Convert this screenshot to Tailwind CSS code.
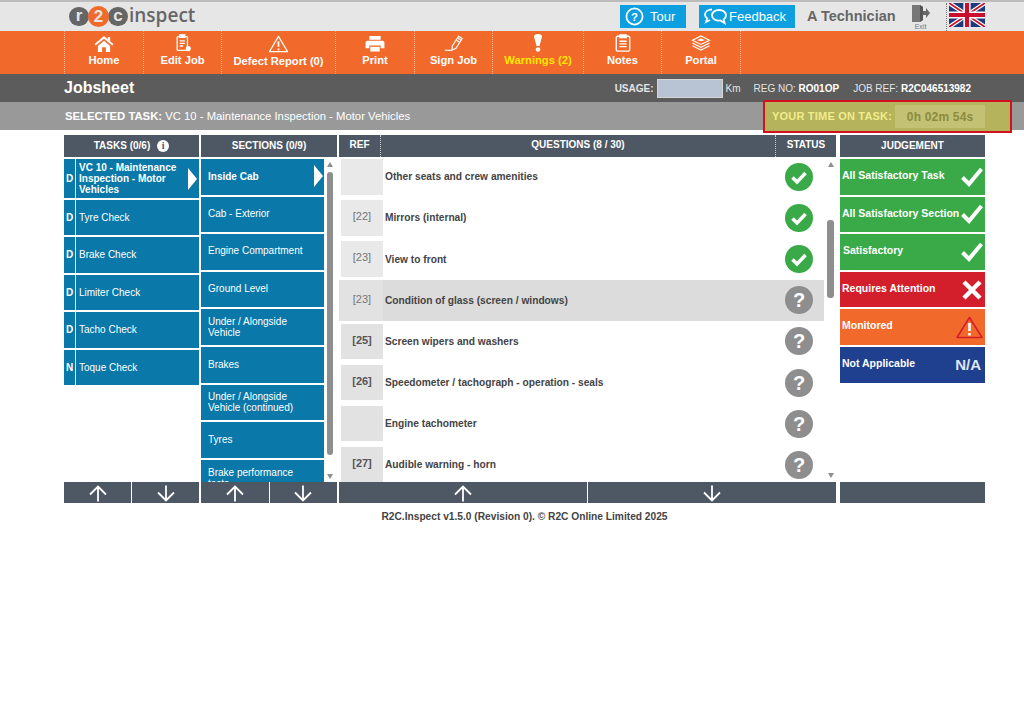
<!DOCTYPE html>
<html lang="en">
  <head>
    <meta charset="UTF-8" />
    <meta name="viewport" content="width=device-width, initial-scale=1.0" />
    <title>R2C Inspect - Jobsheet</title>
    <script src="https://cdn.jsdelivr.net/npm/@tailwindcss/browser@4"></script>
  </head>
  <body class="bg-white font-['Liberation_Sans',Arial,sans-serif] text-[#333] h-[709px] overflow-hidden">
    <!-- top bar -->
    <div class="h-[31px] bg-[#e6e6e6] border-t-2 border-[#bcbcbc] flex items-center pl-[69px] pr-[39px]">
      <div class="flex items-center gap-[1px] w-[129px]">
        <div class="flex items-center -space-x-[1px]">
          <span class="w-[20px] h-[19px] rounded-full bg-[#666] text-[#e6e6e6] text-[17px] font-bold leading-none flex items-center justify-center pb-[3px]">r</span>
          <span class="w-[21px] h-[21px] rounded-full bg-[#f26a2b] text-[#e6e6e6] text-[17px] font-bold leading-none flex items-center justify-center z-10">2</span>
          <span class="w-[20px] h-[19px] rounded-full bg-[#666] text-[#e6e6e6] text-[17px] font-bold leading-none flex items-center justify-center pb-[3px]">c</span>
        </div>
        <span class="text-[19px] font-semibold text-[#666] font-['Open_Sans',sans-serif] leading-none pb-[3px]">inspect</span>
      </div>
      <div class="ml-auto flex items-center">
        <div class="w-[66px] h-[23px] bg-[#0d9fdf] text-white flex items-center pl-[5px] gap-[6px] text-[13px] mr-[13px]">
          <svg class="w-[19px] h-[19px]" viewBox="0 0 20 20" fill="none" stroke="white"><circle cx="10" cy="10" r="8.5" stroke-width="1.8"/><text x="10" y="14.5" text-anchor="middle" font-size="12" font-weight="700" fill="white" stroke="none">?</text></svg>
          <span>Tour</span>
        </div>
        <div class="w-[96px] h-[23px] bg-[#0d9fdf] text-white flex items-center pl-[4px] gap-[1px] text-[13px] mr-[12px]">
          <svg class="w-[25px] h-[19px]" viewBox="0 0 25 19" fill="none" stroke="white" stroke-width="1.8"><path d="M9 2.5c-4 0-7 2-7 5 0 1.600 .8 3 2.200 3.900L3 15l4-2"/><path d="M16 3c4 0 7 2.300 7 5.300 0 1.700-.9 3.200-2.400 4.200l1 3.500-4.300-2.500c-4.500 .5-8.300-1.700-8.300-5.200 0-3 3-5.300 7-5.300z"/></svg>
          <span>Feedback</span>
        </div>
        <span class="text-[14.5px] font-bold text-[#666] w-[104px] pt-[1px]">A Technician</span>
        <div class="w-[35px] flex flex-col items-start">
          <svg class="w-[19px] h-[19px]" viewBox="0 0 19 19"><path d="M1 1h8l3 2v13l-3 2H1z" fill="#777"/><path d="M9 1l3 2v13l-3 2z" fill="#555"/><path d="M12 7h3V4l4 5-4 5v-3h-3z" fill="#666"/></svg>
          <span class="w-[19px] text-center text-[7px] leading-[7px] text-[#777]">Exit</span>
        </div>
        <div class="border-l border-dotted border-[#777] pl-[2px] h-[28px] flex items-start">
          <svg class="w-[36px] h-[24px]" viewBox="0 0 60 40">
            <rect width="60" height="40" fill="#1f3a7a"/>
            <path d="M0 0L60 40M60 0L0 40" stroke="#fff" stroke-width="7"/>
            <path d="M0 0L60 40M60 0L0 40" stroke="#c8102e" stroke-width="3"/>
            <path d="M30 0V40M0 20H60" stroke="#fff" stroke-width="12"/>
            <path d="M30 0V40M0 20H60" stroke="#c8102e" stroke-width="7"/>
          </svg>
        </div>
      </div>
    </div>

    <!-- orange nav -->
    <div class="h-[43px] bg-[#f26a2b] flex pl-[64px] text-white font-bold text-[11.2px]">
      <div class="w-[79px] border-l border-dotted border-[#f6b594] flex flex-col items-center pt-[5px]">
        <svg class="w-[20px] h-[16px]" viewBox="0 0 20 17" fill="white"><path d="M10 0L0 8.500l1.300 1.500L10 2.800l8.700 7.200L20 8.500 16.500 5.600V1h-2.500v2.500z"/><path d="M3.500 10.500L10 5l6.500 5.500V17H12v-5H8v5H3.500z"/></svg>
        <span>Home</span>
      </div>
      <div class="w-[78px] border-l border-dotted border-[#f6b594] flex flex-col items-center pt-[3px]">
        <svg class="w-[16px] h-[18px] ml-[2px]" viewBox="0 0 18 21" fill="none" stroke="white" stroke-width="1.500"><rect x="1" y="3" width="12" height="16" rx="1"/><rect x="4" y="1" width="6" height="3" fill="white"/><path d="M4 8h6M4 11h6M4 14h4"/><circle cx="14" cy="17" r="3" fill="white" stroke="none"/></svg>
        <span>Edit Job</span>
      </div>
      <div class="w-[114px] border-l border-dotted border-[#f6b594] flex flex-col items-center pt-[4px]">
        <svg class="w-[21px] h-[18px]" viewBox="0 0 22 20" fill="none" stroke="white" stroke-width="1.300"><path d="M11 1.500L21 18.500H1z" stroke-linejoin="round"/><path d="M11 7v6M11 15v2" stroke-width="2"/></svg>
        <span>Defect Report (0)</span>
      </div>
      <div class="w-[79px] border-l border-dotted border-[#f6b594] flex flex-col items-center pt-[5px]">
        <svg class="w-[20px] h-[16px]" viewBox="0 0 20 17" fill="white"><rect x="4" y="0" width="12" height="4"/><path d="M2 5h16a2 2 0 0 1 2 2v6h-4v-3H4v3H0V7a2 2 0 0 1 2-2z"/><rect x="5" y="11.500" width="10" height="5"/></svg>
        <span>Print</span>
      </div>
      <div class="w-[78px] border-l border-dotted border-[#f6b594] flex flex-col items-center pt-[4px]">
        <svg class="w-[20px] h-[17px]" viewBox="0 0 22 18" fill="none" stroke="white" stroke-width="1.300"><path d="M9 12L16 1l4 2.500-7 11-4 1.500z"/><path d="M13 5l4 2.500M15 3l4 2.500" /><path d="M1 16.500h8"/></svg>
        <span>Sign Job</span>
      </div>
      <div class="w-[91px] border-l border-dotted border-[#f6b594] flex flex-col items-center pt-[3px] text-[#ffe600]">
        <svg class="w-[10px] h-[18px]" viewBox="0 0 10 18" fill="white"><path d="M1 2.500a4 2.500 0 0 1 8 0L6.500 12h-3z"/><circle cx="5" cy="15.500" r="2.300"/></svg>
        <span>Warnings (2)</span>
      </div>
      <div class="w-[78px] border-l border-dotted border-[#f6b594] flex flex-col items-center pt-[3px]">
        <svg class="w-[16px] h-[18px]" viewBox="0 0 17 20" fill="none" stroke="white" stroke-width="1.500"><rect x="1" y="2.500" width="15" height="16.500" rx="1.500"/><rect x="5" y="1" width="7" height="3" fill="white"/><path d="M4.500 8h8M4.500 11h8M4.500 14h8"/></svg>
        <span>Notes</span>
      </div>
      <div class="w-[80px] border-x border-dotted border-[#f6b594] flex flex-col items-center pt-[4px]">
        <svg class="w-[20px] h-[17px]" viewBox="0 0 20 18" fill="none" stroke="white" stroke-width="1.200"><path d="M10 1l9 4.500-9 4.500-9-4.500z"/><path d="M1 8.500L10 13l9-4.500M1 11.500L10 16l9-4.500"/><path d="M6 5.500l4-2 4 2-4 1z" fill="white" stroke="none"/></svg>
        <span>Portal</span>
      </div>
    </div>

    <!-- jobsheet band -->
    <div class="h-[28px] bg-[#5c5c5c] flex items-center pl-[64px] pr-[53px] text-white">
      <span class="text-[16px] font-bold">Jobsheet</span>
      <div class="ml-auto flex items-center text-[10px] text-[#e4e4e4]">
        <span class="font-bold">USAGE:</span>
        <div class="w-[66px] h-[19px] bg-[#b8c4d4] border border-[#d5d5d5] ml-[3px] mr-[3px]"></div>
        <span class="w-[28px]">Km</span>
        <span>REG NO: <b class="text-white">RO01OP</b></span>
        <span class="ml-[14px]">JOB REF: <b class="text-white">R2C046513982</b></span>
      </div>
    </div>

    <!-- selected task band -->
    <div class="h-[28px] bg-[#999] flex items-center pl-[65px] text-[11.3px] text-white relative">
      <span><b>SELECTED TASK:</b> VC 10 - Maintenance Inspection - Motor Vehicles</span>
      <div class="absolute left-[763px] -top-[2px] w-[249px] h-[33px] bg-[#b5b35c] border-2 border-[#d2111f] flex items-center pl-[7px] text-[#f0ec8c] font-bold text-[11px] tracking-[0.2px]">
        <span>YOUR TIME ON TASK:</span>
        <div class="ml-[3px] w-[90px] h-[23px] bg-[#c3c274] text-[#8c8a3c] text-[12px] flex items-center justify-center">0h 02m 54s</div>
      </div>
    </div>

    <!-- panels -->
    <div class="flex pl-[64px] mt-[5px] gap-[2px] text-white">
      <!-- tasks -->
      <div class="w-[135px] flex flex-col">
        <div class="h-[22px] bg-[#4d5864] flex items-center justify-center gap-[7px] text-[10px] font-bold pb-[1px]">
          <span>TASKS (0/6)</span>
          <span class="w-[12px] h-[12px] rounded-full bg-white text-[#4d5864] text-[10px] leading-none flex items-center justify-center font-['Liberation_Serif',serif]">i</span>
        </div>
        <div class="h-[325px] pt-[2px] flex flex-col gap-[2px] text-[10px] font-bold">
          <div class="h-[38.500px] bg-[#0a78a8] flex items-center relative">
            <span class="w-[12px] h-full border-r border-[#d8e8f0] flex items-center justify-center">D</span>
            <span class="pl-[3px] leading-[11px] w-[110px]">VC 10 - Maintenance Inspection - Motor Vehicles</span>
            <span class="absolute right-[2px] top-[9px] border-y-[11px] border-y-transparent border-l-[9px] border-l-white"></span>
          </div>
          <div class="h-[35.500px] bg-[#0a78a8] flex items-center"><span class="w-[12px] h-full border-r border-[#d8e8f0] flex items-center justify-center">D</span><span class="pl-[3px] font-normal">Tyre Check</span></div>
          <div class="h-[35.500px] bg-[#0a78a8] flex items-center"><span class="w-[12px] h-full border-r border-[#d8e8f0] flex items-center justify-center">D</span><span class="pl-[3px] font-normal">Brake Check</span></div>
          <div class="h-[35.500px] bg-[#0a78a8] flex items-center"><span class="w-[12px] h-full border-r border-[#d8e8f0] flex items-center justify-center">D</span><span class="pl-[3px] font-normal">Limiter Check</span></div>
          <div class="h-[35.500px] bg-[#0a78a8] flex items-center"><span class="w-[12px] h-full border-r border-[#d8e8f0] flex items-center justify-center">D</span><span class="pl-[3px] font-normal">Tacho Check</span></div>
          <div class="h-[35.500px] bg-[#0a78a8] flex items-center"><span class="w-[12px] h-full border-r border-[#d8e8f0] flex items-center justify-center">N</span><span class="pl-[3px] font-normal">Toque Check</span></div>
        </div>
        <div class="h-[21px] flex gap-[1px]">
          <div class="flex-1 bg-[#4d5864] flex items-center justify-center pt-[2px]"><svg class="w-[20px] h-[17px]" viewBox="0 0 20 17" fill="none" stroke="white" stroke-width="1.800"><path d="M10 16.500V1.500M2 9.500l8-8 8 8"/></svg></div>
          <div class="flex-1 bg-[#4d5864] flex items-center justify-center pt-[2px]"><svg class="w-[20px] h-[17px]" viewBox="0 0 20 17" fill="none" stroke="white" stroke-width="1.800"><path d="M10 .5V15.500M2 7.500l8 8 8-8"/></svg></div>
        </div>
      </div>

      <!-- sections -->
      <div class="w-[136px] flex flex-col">
        <div class="h-[22px] bg-[#4d5864] flex items-center justify-center text-[10px] font-bold pb-[1px]">SECTIONS (0/9)</div>
        <div class="h-[325px] pt-[2px] overflow-hidden flex">
          <div class="w-[123px] flex flex-col gap-[2px] text-[10px] leading-[11px] shrink-0">
            <div class="h-[35.600px] shrink-0 bg-[#0a78a8] flex items-center pl-[7px] font-bold relative">Inside Cab<span class="absolute right-[1px] top-[6px] border-y-[11px] border-y-transparent border-l-[9px] border-l-white"></span></div>
            <div class="h-[35.600px] shrink-0 bg-[#0a78a8] flex items-center pl-[7px] pb-[2px]">Cab - Exterior</div>
            <div class="h-[35.600px] shrink-0 bg-[#0a78a8] flex items-center pl-[7px] pb-[2px]">Engine Compartment</div>
            <div class="h-[35.600px] shrink-0 bg-[#0a78a8] flex items-center pl-[7px] pb-[2px]">Ground Level</div>
            <div class="h-[35.600px] shrink-0 bg-[#0a78a8] flex items-center pl-[7px] pr-[14px]">Under / Alongside Vehicle</div>
            <div class="h-[35.600px] shrink-0 bg-[#0a78a8] flex items-center pl-[7px]">Brakes</div>
            <div class="h-[35.600px] shrink-0 bg-[#0a78a8] flex items-center pl-[7px] pr-[14px]">Under / Alongside Vehicle (continued)</div>
            <div class="h-[35.600px] shrink-0 bg-[#0a78a8] flex items-center pl-[7px]">Tyres</div>
            <div class="h-[35.600px] shrink-0 bg-[#0a78a8] flex items-center pl-[7px] pr-[20px]">Brake performance tests</div>
          </div>
          <div class="flex-1 flex flex-col items-center pt-[3px] pr-[2px] h-[323px]">
            <span class="border-x-[3.500px] border-x-transparent border-b-[5px] border-b-[#8e8e8e]"></span>
            <span class="w-[6px] h-[283px] mt-[5px] rounded-[3px] bg-[#8e8e8e]"></span>
            <span class="border-x-[3.500px] border-x-transparent border-t-[5px] border-t-[#8e8e8e] mt-[19px]"></span>
          </div>
        </div>
        <div class="h-[21px] flex gap-[1px]">
          <div class="flex-1 bg-[#4d5864] flex items-center justify-center pt-[2px]"><svg class="w-[20px] h-[17px]" viewBox="0 0 20 17" fill="none" stroke="white" stroke-width="1.800"><path d="M10 16.500V1.500M2 9.500l8-8 8 8"/></svg></div>
          <div class="flex-1 bg-[#4d5864] flex items-center justify-center pt-[2px]"><svg class="w-[20px] h-[17px]" viewBox="0 0 20 17" fill="none" stroke="white" stroke-width="1.800"><path d="M10 .5V15.500M2 7.500l8 8 8-8"/></svg></div>
        </div>
      </div>

      <!-- questions -->
      <div class="w-[497px] flex flex-col">
        <div class="h-[22px] bg-[#4d5864] flex items-center text-[10px] font-bold">
          <span class="w-[42px] text-center border-r border-dotted border-[#ccc] leading-[20px] h-[22px]">REF</span>
          <span class="w-[394px] text-center leading-[20px] h-[22px]">QUESTIONS (8 / 30)</span>
          <span class="flex-1 text-center border-l border-dotted border-[#ccc] leading-[20px] h-[22px]">STATUS</span>
        </div>
        <div class="h-[325px] overflow-hidden flex text-[10.200px] font-bold text-[#444]">
          <div class="w-[487px] shrink-0">
            <div class="h-[41.100px] flex items-center pl-[2px]"><span class="w-[42px] h-[35.500px] -mt-[1px] bg-[#e9e9e9] mr-[2px] shrink-0"></span><span class="flex-1 pb-[1px]">Other seats and crew amenities</span><svg class="w-[28px] h-[28px] mr-[13px] -mt-[1px]" viewBox="0 0 28 28"><circle cx="14" cy="14" r="14" fill="#3aaa49"/><path d="M7.500 14.500l4.500 4.500 8.500-9" fill="none" stroke="white" stroke-width="3.500"/></svg></div>
            <div class="h-[41.100px] flex items-center pl-[2px]"><span class="w-[42px] h-[35.500px] -mt-[1px] bg-[#e9e9e9] mr-[2px] shrink-0 flex items-center justify-center pb-[3px] text-[11px] text-[#777] font-normal">[22]</span><span class="flex-1 pb-[1px]">Mirrors (internal)</span><svg class="w-[28px] h-[28px] mr-[13px] -mt-[1px]" viewBox="0 0 28 28"><circle cx="14" cy="14" r="14" fill="#3aaa49"/><path d="M7.500 14.500l4.500 4.500 8.500-9" fill="none" stroke="white" stroke-width="3.500"/></svg></div>
            <div class="h-[41.100px] flex items-center pl-[2px]"><span class="w-[42px] h-[35.500px] -mt-[1px] bg-[#e9e9e9] mr-[2px] shrink-0 flex items-center justify-center pb-[3px] text-[11px] text-[#777] font-normal">[23]</span><span class="flex-1 pb-[1px]">View to front</span><svg class="w-[28px] h-[28px] mr-[13px] -mt-[1px]" viewBox="0 0 28 28"><circle cx="14" cy="14" r="14" fill="#3aaa49"/><path d="M7.500 14.500l4.500 4.500 8.500-9" fill="none" stroke="white" stroke-width="3.500"/></svg></div>
            <div class="h-[41.100px] flex items-center bg-[#dcdcdc] w-[485px]"><span class="w-[44px] h-full bg-[#e2e2e2] mr-[2px] shrink-0 flex items-center justify-center pl-[2px] pb-[4px] text-[11px] text-[#777] font-normal">[23]</span><span class="flex-1 pb-[1px]">Condition of glass (screen / windows)</span><svg class="w-[28px] h-[28px] mr-[11px] -mt-[1px]" viewBox="0 0 28 28"><circle cx="14" cy="14" r="14" fill="#8e8e8e"/><text x="14" y="21" text-anchor="middle" font-size="20" font-weight="700" fill="white">?</text></svg></div>
            <div class="h-[41.100px] flex items-center pl-[2px]"><span class="w-[42px] h-[35.500px] -mt-[1px] bg-[#e2e2e2] mr-[2px] shrink-0 flex items-center justify-center pb-[3px] text-[11px] text-[#555]">[25]</span><span class="flex-1 pb-[1px]">Screen wipers and washers</span><svg class="w-[28px] h-[28px] mr-[13px] -mt-[1px]" viewBox="0 0 28 28"><circle cx="14" cy="14" r="14" fill="#8e8e8e"/><text x="14" y="21" text-anchor="middle" font-size="20" font-weight="700" fill="white">?</text></svg></div>
            <div class="h-[41.100px] flex items-center pl-[2px]"><span class="w-[42px] h-[35.500px] -mt-[1px] bg-[#e2e2e2] mr-[2px] shrink-0 flex items-center justify-center pb-[3px] text-[11px] text-[#555]">[26]</span><span class="flex-1 pb-[1px]">Speedometer / tachograph - operation - seals</span><svg class="w-[28px] h-[28px] mr-[13px] -mt-[1px]" viewBox="0 0 28 28"><circle cx="14" cy="14" r="14" fill="#8e8e8e"/><text x="14" y="21" text-anchor="middle" font-size="20" font-weight="700" fill="white">?</text></svg></div>
            <div class="h-[41.100px] flex items-center pl-[2px]"><span class="w-[42px] h-[35.500px] -mt-[1px] bg-[#e2e2e2] mr-[2px] shrink-0"></span><span class="flex-1 pb-[1px]">Engine tachometer</span><svg class="w-[28px] h-[28px] mr-[13px] -mt-[1px]" viewBox="0 0 28 28"><circle cx="14" cy="14" r="14" fill="#8e8e8e"/><text x="14" y="21" text-anchor="middle" font-size="20" font-weight="700" fill="white">?</text></svg></div>
            <div class="h-[41.100px] flex items-center pl-[2px]"><span class="w-[42px] h-[35.500px] -mt-[1px] bg-[#e2e2e2] mr-[2px] shrink-0 flex items-center justify-center pb-[3px] text-[11px] text-[#555]">[27]</span><span class="flex-1 pb-[1px]">Audible warning - horn</span><svg class="w-[28px] h-[28px] mr-[13px] -mt-[1px]" viewBox="0 0 28 28"><circle cx="14" cy="14" r="14" fill="#8e8e8e"/><text x="14" y="21" text-anchor="middle" font-size="20" font-weight="700" fill="white">?</text></svg></div>
          </div>
          <div class="flex-1 flex flex-col items-center pt-[5px] pr-[1px] h-[325px]">
            <span class="border-x-[3.500px] border-x-transparent border-b-[5px] border-b-[#8e8e8e]"></span>
            <span class="w-[7px] h-[78px] mt-[53px] rounded-[3px] bg-[#8e8e8e]"></span>
            <span class="border-x-[3.500px] border-x-transparent border-t-[5px] border-t-[#8e8e8e] mt-[175px]"></span>
          </div>
        </div>
        <div class="h-[21px] flex gap-[1px]">
          <div class="flex-1 bg-[#4d5864] flex items-center justify-center pt-[2px]"><svg class="w-[20px] h-[17px]" viewBox="0 0 20 17" fill="none" stroke="white" stroke-width="1.800"><path d="M10 16.500V1.500M2 9.500l8-8 8 8"/></svg></div>
          <div class="flex-1 bg-[#4d5864] flex items-center justify-center pt-[2px]"><svg class="w-[20px] h-[17px]" viewBox="0 0 20 17" fill="none" stroke="white" stroke-width="1.800"><path d="M10 .5V15.500M2 7.500l8 8 8-8"/></svg></div>
        </div>
      </div>

      <!-- judgement -->
      <div class="w-[145px] ml-[2px] flex flex-col">
        <div class="h-[22px] bg-[#4d5864] flex items-center justify-center text-[10px] font-bold pb-[1px]">JUDGEMENT</div>
        <div class="h-[325px] pt-[2px] flex flex-col gap-[2px] text-[10.500px] font-bold">
          <div class="h-[35.600px] bg-[#3aaa49] flex items-center justify-between pl-[2px] pr-[2px]"><span class="pb-[2px]">All Satisfactory Task</span><svg class="w-[22px] h-[20px]" viewBox="0 0 22 20" fill="none" stroke="white" stroke-width="4"><path d="M1.500 10.500l6.500 6.500L20.500 2"/></svg></div>
          <div class="h-[35.600px] bg-[#3aaa49] flex items-center justify-between pl-[2px] pr-[2px]"><span class="pb-[2px]">All Satisfactory Section</span><svg class="w-[22px] h-[20px]" viewBox="0 0 22 20" fill="none" stroke="white" stroke-width="4"><path d="M1.500 10.500l6.500 6.500L20.500 2"/></svg></div>
          <div class="h-[35.600px] bg-[#3aaa49] flex items-center justify-between pl-[3px] pr-[2px]"><span class="pb-[2px]">Satisfactory</span><svg class="w-[22px] h-[20px]" viewBox="0 0 22 20" fill="none" stroke="white" stroke-width="4"><path d="M1.500 10.500l6.500 6.500L20.500 2"/></svg></div>
          <div class="h-[35.600px] bg-[#d21f2b] flex items-center justify-between pl-[2px] pr-[3px]"><span class="pb-[2px]">Requires Attention</span><svg class="w-[20px] h-[20px]" viewBox="0 0 20 20" fill="none" stroke="white" stroke-width="4.500"><path d="M2 2l16 16M18 2L2 18"/></svg></div>
          <div class="h-[35.600px] bg-[#f26a2b] flex items-center justify-between pl-[2px] pr-[2px]"><span class="pb-[2px]">Monitored</span><svg class="w-[27px] h-[23px]" viewBox="0 0 27 23"><path d="M13.500 1.500L26 21.500H1z" fill="#f26a2b" stroke="#d21f2b" stroke-width="1.600" stroke-linejoin="round"/><path d="M13.500 7v8M13.500 17v2.500" stroke="white" stroke-width="2.600"/></svg></div>
          <div class="h-[35.600px] bg-[#1f3f8f] flex items-center justify-between pl-[2px] pr-[4px]"><span class="pb-[2px]">Not Applicable</span><span class="text-[15px] text-[#dfe6f5]">N/A</span></div>
        </div>
        <div class="h-[21px] bg-[#4d5864]"></div>
      </div>
    </div>

    <p class="text-center text-[10.200px] font-bold text-[#444] mt-[6px] pl-[25px]">R2C.Inspect v1.5.0 (Revision 0). © R2C Online Limited 2025</p>
  </body>
</html>
